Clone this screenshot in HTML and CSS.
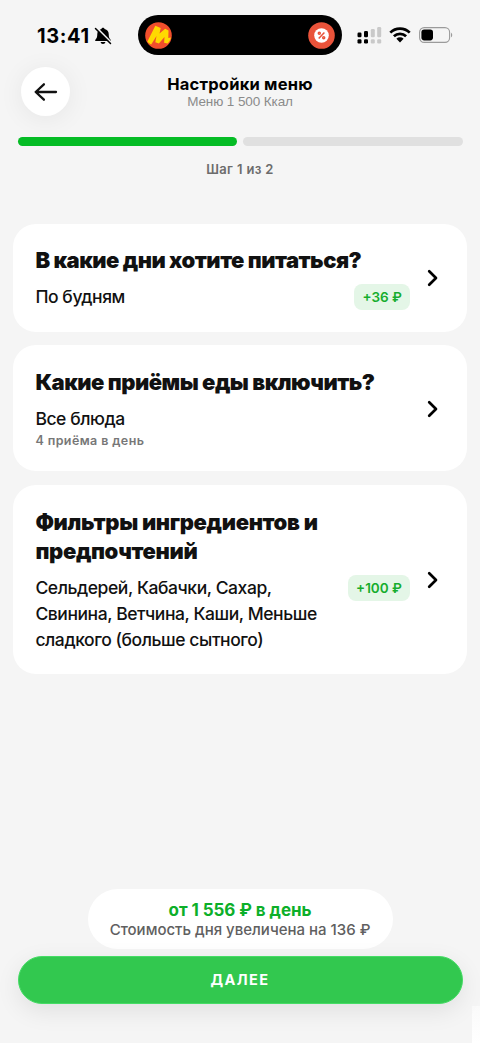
FILE: index.html
```html
<!DOCTYPE html>
<html lang="ru">
<head>
<meta charset="utf-8">
<meta name="viewport" content="width=device-width, initial-scale=1">
<title>Настройки меню</title>
<link rel="stylesheet" href="styles.css">
</head>
<body>
<div class="screen">
  <div class="status">
    <span class="clock">13:41</span>
    <svg class="bell" width="18" height="18" viewBox="0 0 18 18">
      <path d="M9 .7c.9 0 1.500.6 1.600 1.400 2.600.7 4.100 2.600 4.100 5 0 3.300.6 4.300 1.700 5.300.8.8.5 1.700-.6 1.700H2.200c-1.100 0-1.400-.9-.6-1.700 1.100-1 1.700-2 1.700-5.300 0-2.400 1.500-4.300 4.100-5C7.500 1.300 8.100.7 9 .7zM6.600 15h4.800c-.2 1.300-1.100 2-2.400 2s-2.200-.7-2.400-2z"/>
      <path d="M2.500.8 17.500 15.800" stroke="#f5f5f5" stroke-width="2"/>
      <path d="M1.500 1.500 16.500 16.500" stroke="#000" stroke-width="1.500" stroke-linecap="round"/>
    </svg>
    <div class="island">
      <svg width="27" height="27" viewBox="0 0 27 27">
        <circle cx="13.500" cy="13.500" r="13.300" fill="#f04e2c"/>
        <path d="M2.300 19.800 10.300 3.700l5.400 2.200-1.200 5.600 5.700-4.700 3.300 1.700-.2 7.600 2.700-.5c-.5 2.200-1.600 4.200-3.300 6l-3.600-.8.4-5.900-5.600 6.700-3.600-1.400 1.200-6.200-5.300 8.500c-1.600-.7-2.700-1.500-3.900-2.700z" fill="#ffd900"/>
      </svg>
      <svg width="27" height="27" viewBox="0 0 27 27">
        <circle cx="13.500" cy="13.500" r="13.300" fill="#e9533a"/>
        <circle cx="13.500" cy="13.500" r="7.300" fill="#fff"/>
        <g fill="none" stroke="#e9533a" stroke-width="1.500"><path d="m10.700 16.500 5.700-6"/><circle cx="11.300" cy="11.200" r="1"/><circle cx="15.700" cy="15.800" r="1"/></g>
      </svg>
    </div>
    <svg class="signal" width="25" height="17" viewBox="0 0 25 17">
      <g fill="#000"><rect x=".5" y="5.500" width="4" height="4.800" rx="1.200"/><rect x="7" y="4" width="4" height="6.300" rx="1.200"/><rect x=".5" y="12.200" width="4" height="4.300" rx="1.200"/><rect x="7" y="12.200" width="4" height="4.300" rx="1.200"/></g>
      <g fill="#c9c9c9"><rect x="13.800" y="2" width="4" height="8.300" rx="1.200"/><rect x="20.200" y="0" width="4" height="10.300" rx="1.200"/><rect x="13.800" y="12.200" width="4" height="4.300" rx="1.200"/><rect x="20.200" y="12.200" width="4" height="4.300" rx="1.200"/></g>
    </svg>
    <svg class="wifi" width="22" height="16" viewBox="0 0 22 16">
      <g fill="none" stroke="#000" stroke-width="2.700"><path d="M1.300 5.600a13.800 13.800 0 0 1 19.400 0"/><path d="M4.900 9.300a8.700 8.700 0 0 1 12.200 0"/></g>
      <path d="M11 15.400 7.400 11.800a5.200 5.200 0 0 1 7.200 0z"/>
    </svg>
    <svg class="battery" width="34" height="16" viewBox="0 0 34 16">
      <rect x=".6" y=".6" width="30" height="14.800" rx="4.600" fill="none" stroke="#9b9b9b" stroke-width="1.100"/>
      <rect x="2.400" y="2.600" width="11.600" height="10.800" rx="2.800"/>
      <path d="M32 5.700c1.600.6 1.600 4 0 4.600z" fill="#9b9b9b"/>
    </svg>
  </div>

  <header class="header">
    <button class="back" aria-label="Назад">
      <svg width="24" height="20" viewBox="0 0 24 20" fill="none" stroke="#111" stroke-width="2.300" stroke-linecap="round" stroke-linejoin="round"><path d="M22 10H1.700M9.900 2.300 1.700 10l8.200 7.700"/></svg>
    </button>
    <div class="titles">
      <h1 class="title">Настройки меню</h1>
      <p class="subtitle">Меню 1 500 Ккал</p>
    </div>
  </header>

  <div class="progress"><span class="bar bar-done"></span><span class="bar"></span></div>
  <p class="step">Шаг 1 из 2</p>

  <main class="cards">
    <section class="card">
      <div class="content">
        <h2 class="question q-days">В какие дни хотите питаться?</h2>
        <div class="row"><p class="answer">По будням</p><span class="badge badge-36">+36 ₽</span></div>
      </div>
      <svg class="chevron" width="12" height="18" viewBox="0 0 12 18"><path d="m2.200 2.200 6.800 6.800-6.800 6.800"/></svg>
    </section>
    <section class="card">
      <div class="content">
        <h2 class="question q-meals">Какие приёмы еды включить?</h2>
        <div class="row"><p class="answer">Все блюда</p></div>
        <p class="note">4 приёма в день</p>
      </div>
      <svg class="chevron" width="12" height="18" viewBox="0 0 12 18"><path d="m2.200 2.200 6.800 6.800-6.800 6.800"/></svg>
    </section>
    <section class="card">
      <div class="content">
        <h2 class="question q-filters">Фильтры ингредиентов и<br>предпочтений</h2>
        <div class="row"><p class="answer">Сельдерей, Кабачки, Сахар,<br>Свинина, Ветчина, Каши, Меньше<br>сладкого (больше сытного)</p><span class="badge badge-100">+100 ₽</span></div>
      </div>
      <svg class="chevron" width="12" height="18" viewBox="0 0 12 18"><path d="m2.200 2.200 6.800 6.800-6.800 6.800"/></svg>
    </section>
  </main>

  <footer class="footer">
    <div class="price">
      <p class="price-main">от 1 556 ₽ в день</p>
      <p class="price-note">Стоимость дня увеличена на 136 ₽</p>
    </div>
    <button class="next">ДАЛЕЕ</button>
  </footer>
</div>
</body>
</html>
```
FILE: styles.css
```css
* { box-sizing: border-box; }
body { margin: 0; background: #f5f5f5; font-family: Inter, "Noto Sans", sans-serif; color: #111; }
h1, h2, p { margin: 0; white-space: nowrap; }
button { border: 0; padding: 0; font-family: inherit; }
svg { display: block; flex: none; }
.screen { width: 480px; height: 1043px; display: flex; flex-direction: column; overflow: hidden; background: linear-gradient(#fafafa, #fff) right bottom / 8px 37px no-repeat; }

.status { height: 55px; padding: 15px 27px 0 37px; display: flex; align-items: center; flex: none; color: #000; }
.clock { width: 57px; font-size: 20px; font-weight: 700; line-height: 40px; letter-spacing: .6px; white-space: nowrap; padding-top: 1px; }
.bell { margin-top: 1px; }
.island { width: 204.500px; height: 40px; margin-left: 25.500px; padding: 0 7px; border-radius: 20px; background: #000; display: flex; align-items: center; justify-content: space-between; flex: none; }
.signal { margin-left: 15px; }
.wifi { margin-left: 7px; }
.battery { margin-left: 8px; }

.header { height: 82px; padding: 12px 22px 0 21px; display: grid; grid-template-columns: 49px 1fr 48px; align-items: start; flex: none; }
.back { width: 49px; height: 49px; border-radius: 50%; background: #fff; display: grid; place-items: center; box-shadow: 0 3px 26px rgba(0, 0, 0, .065); }
.titles { text-align: center; padding-top: 7px; }
.title { font-size: 16.500px; line-height: 20px; font-weight: 700; letter-spacing: .2px; color: #000; }
.subtitle { font-family: "Liberation Sans", Arial, sans-serif; font-size: 13.5px; line-height: 15px; letter-spacing: -.1px; color: #8b8b8b; }

.progress { height: 9px; padding: 0 17.500px; display: flex; gap: 6px; flex: none; }
.bar { flex: 1; border-radius: 5px; background: #e0e0e0; }
.bar-done { background: #05bc25; }
.step { margin-top: 13px; margin-bottom: 1px; line-height: 20px; font-size: 13px; font-weight: 600; letter-spacing: .35px; text-align: center; color: #6c6c6c; }

.cards { margin-top: 44px; padding: 0 13px; display: flex; flex-direction: column; gap: 13.400px; }
.card { padding: 22px 28.500px 22px 22.400px; border-radius: 23px; background: #fff; display: flex; align-items: center; justify-content: space-between; }
.card:nth-child(2) { padding-top: 22.700px; padding-bottom: 21.800px; }
.card:nth-child(3) { padding-top: 22.800px; padding-bottom: 21.400px; }
.content { width: 374.600px; }
.question { font-size: 22px; line-height: 29px; font-weight: 900; }
.q-days { letter-spacing: -.51px; }
.q-meals { letter-spacing: -.51px; }
.q-filters { letter-spacing: -.34px; }
.row { margin-top: 9px; display: flex; align-items: flex-start; justify-content: space-between; }
.answer { font-size: 17.500px; line-height: 26px; font-weight: 500; letter-spacing: -.430px; }
.note { margin-bottom: .5px; font-size: 12.500px; line-height: 17px; font-weight: 600; letter-spacing: .4px; color: #777; }
.badge { height: 26px; padding: 0 8px; border-radius: 8px; background: #e4f6e7; color: #16ad2d; font-size: 13.500px; line-height: 26px; font-weight: 600; white-space: nowrap; text-align: center; }
.badge-36 { width: 55.500px; }
.badge-100 { width: 62px; }
.chevron { fill: none; stroke: #000; stroke-width: 2.700; stroke-linecap: round; stroke-linejoin: round; }

.footer { margin-top: auto; padding: 0 17.500px 39.500px; display: flex; flex-direction: column; align-items: center; }
.price { width: 305px; height: 60px; padding-top: 11px; border-radius: 30px; background: #fff; text-align: center; }
.price-main { font-size: 17px; line-height: 21px; font-weight: 700; letter-spacing: -.05px; color: #0caf29; }
.price-note { font-size: 15px; line-height: 18px; font-weight: 500; color: #606060; }
.next { width: 445px; height: 47.500px; margin-top: 7px; border: 1px solid #45dc65; border-radius: 24px; background: #32c84f; color: #fff; font-size: 14.500px; font-weight: 700; letter-spacing: 1.400px; box-shadow: 0 7px 24px rgba(0, 0, 0, .085); }
```
